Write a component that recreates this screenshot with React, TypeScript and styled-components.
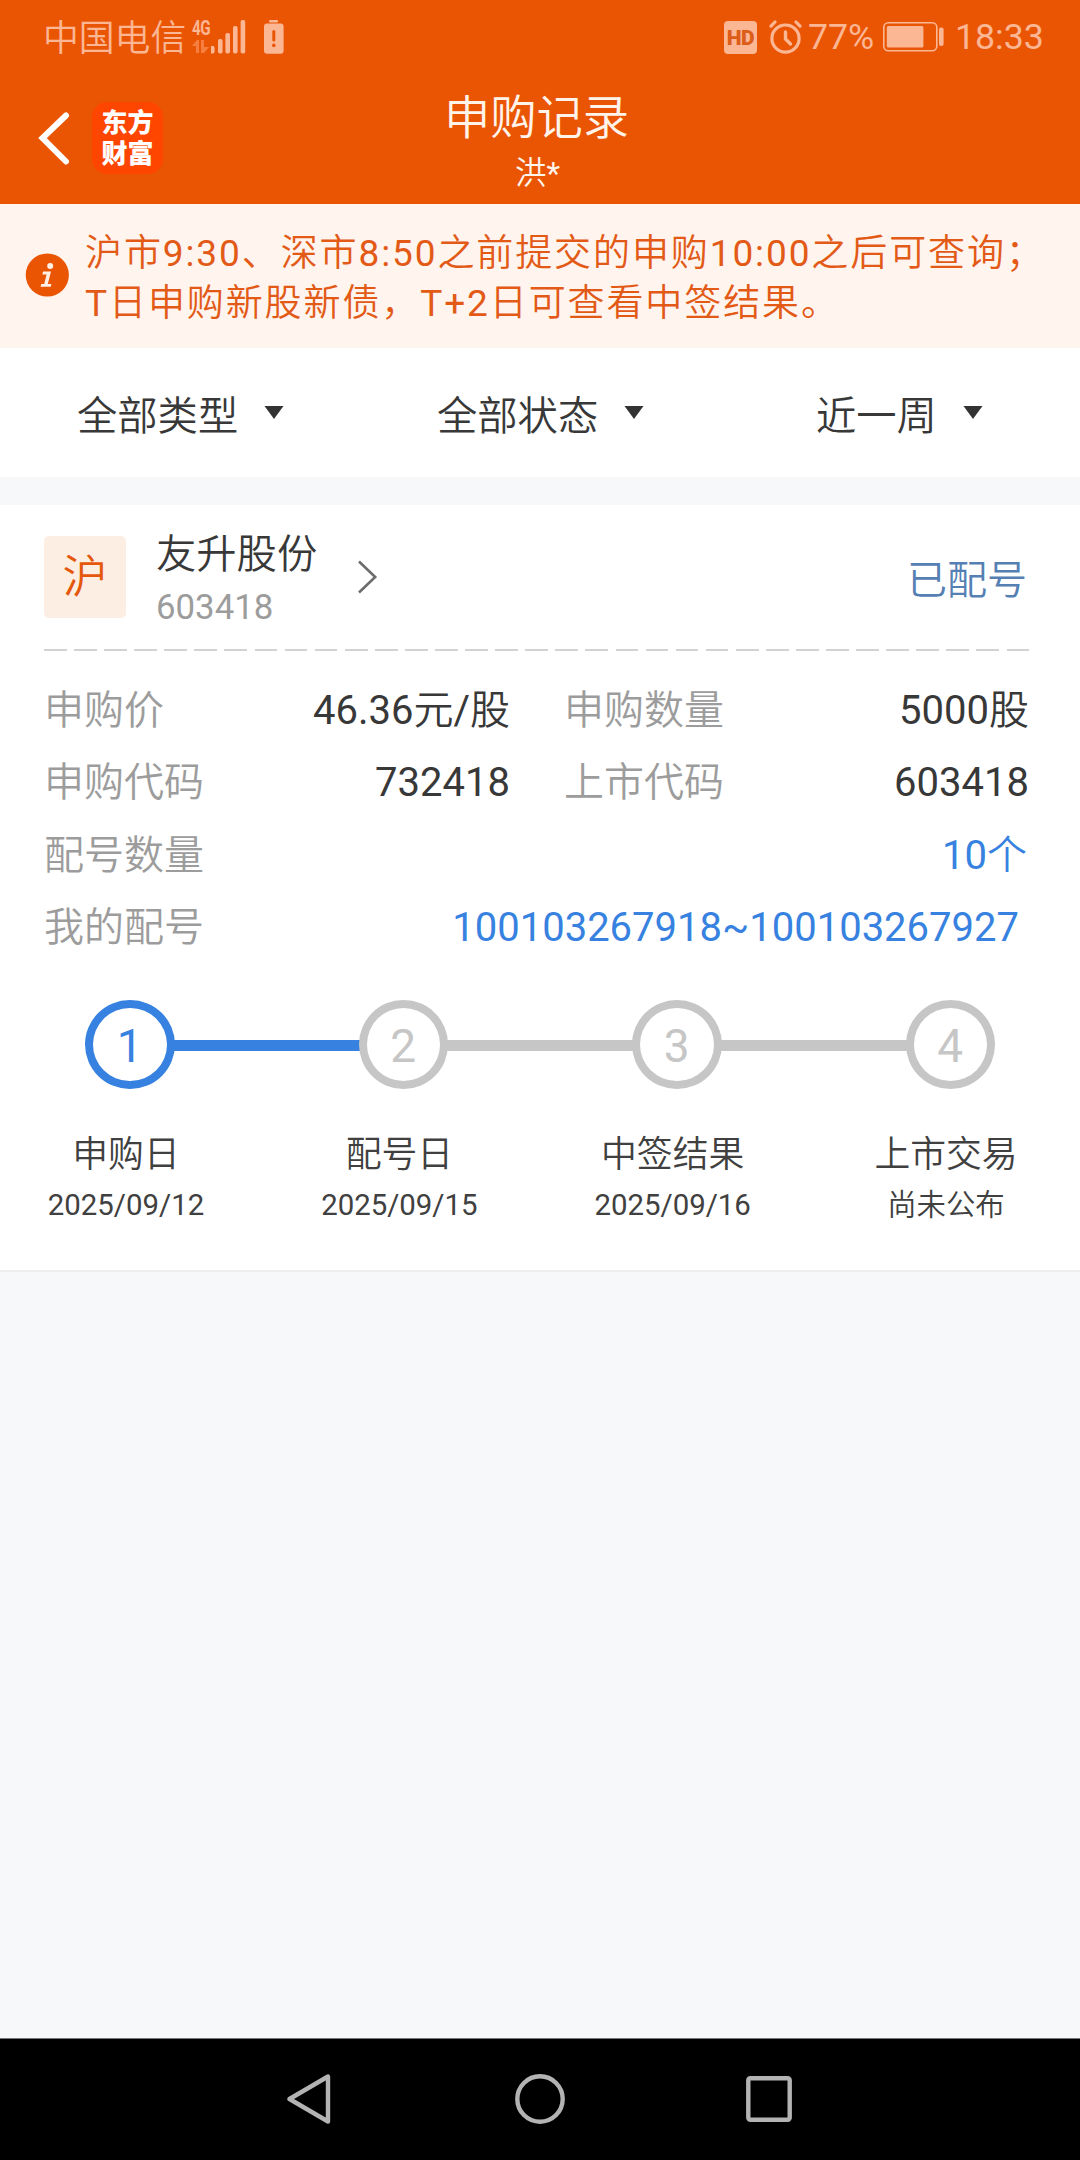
import React from 'react';
import styled, { createGlobalStyle } from 'styled-components';

const ORANGE = '#ea5504';
const PEACH = '#fbb694';
const BLUE = '#3782e0';
const GREY = '#c6c6c6';
const PAGE = '#f6f8fa';

const GlobalStyle = createGlobalStyle`
  * { box-sizing: border-box; }
  body {
    margin: 0;
    background: ${PAGE};
    font-family: Roboto, 'Noto Sans CJK SC DemiLight', 'Noto Sans CJK SC Light', 'Noto Sans CJK SC', sans-serif;
  }
  svg { display: block; flex: none; }
`;

const Screen = styled.div`
  display: flex;
  flex-direction: column;
  width: 1080px;
  height: 2160px;
  overflow: hidden;
  white-space: nowrap;
  background: ${PAGE};
`;

const StatusBar = styled.div`
  display: flex;
  justify-content: space-between;
  height: 74px;
  padding: 0 37px 0 43px;
  background: ${ORANGE};
  color: ${PEACH};
`;

const StatusGroup = styled.div`
  display: flex;
  align-items: center;
  height: 74px;
`;

const StatusText = styled.span<{ $w: number }>`
  width: ${(p) => p.$w}px;
  font-size: 35.7px;
  line-height: 74px;
`;

const Carrier = styled.span`
  width: 145px;
  padding-top: 3px;
  font-size: 35.8px;
  line-height: 72px;
`;

const Network = styled.div`
  display: flex;
  flex-direction: column;
  width: 19px;
  margin: 0 0 1px 4px;
`;

const NetworkText = styled.span`
  height: 20px;
  font-size: 20px;
  font-weight: 700;
  line-height: 16px;
  letter-spacing: -0.5px;
  transform: scaleX(0.76);
  transform-origin: left;
`;

const HdBadge = styled.span`
  width: 33px;
  height: 33px;
  margin-right: 12px;
  border-radius: 4px;
  background: ${PEACH};
  color: #dc5c18;
  font-size: 21px;
  font-weight: 900;
  line-height: 34px;
  text-align: center;
  letter-spacing: -0.5px;
`;

const Header = styled.header`
  display: grid;
  grid-template-columns: 240px 1fr 240px;
  height: 130px;
  background: ${ORANGE};
  color: #fff3ea;
`;

const HeaderLeft = styled.div`
  display: flex;
  align-items: center;
  gap: 22px;
  height: 128px;
  padding-left: 38px;
`;

const Logo = styled.div`
  display: flex;
  flex-direction: column;
  align-items: center;
  width: 71px;
  height: 72px;
  padding-top: 6px;
  border-radius: 15px;
  background: #ff4600;
  color: #fff;
  font-family: Roboto, 'Noto Sans CJK SC', sans-serif;
  font-size: 26px;
  font-weight: 900;
  line-height: 31px;
`;

const HeaderTitle = styled.div`
  display: flex;
  flex-direction: column;
  align-items: center;
`;

const Title = styled.h1`
  margin: 14px 0 0 -7px;
  font-size: 46.3px;
  font-weight: 400;
  line-height: 60px;
`;

const Account = styled.span`
  margin-left: -5px;
  font-size: 31.5px;
  line-height: 52px;
`;

const Notice = styled.div`
  display: flex;
  align-items: center;
  gap: 15px;
  height: 144px;
  padding: 0 0 2px 25px;
  background: #fff4ee;
  color: #e25a16;
`;

const NoticeText = styled.p`
  margin: 8px 0 0;
  font-size: 37px;
  line-height: 49.6px;
  letter-spacing: 1.9px;
`;

const Filters = styled.div`
  display: flex;
  height: 129px;
  padding-left: 77px;
  background: #fff;
  color: #383838;
`;

const Filter = styled.div<{ $w: number }>`
  display: flex;
  align-items: center;
  gap: 26px;
  width: ${(p) => p.$w}px;
  height: 129px;
  font-size: 40.3px;
`;

const Card = styled.section`
  display: flex;
  flex-direction: column;
  height: 767px;
  margin-top: 28px;
  border-bottom: 2px solid #eceeef;
  background: #fff;
`;

const StockHead = styled.div`
  display: flex;
  align-items: center;
  height: 144px;
  padding: 0 53px 0 44px;
`;

const Market = styled.div`
  width: 82px;
  height: 82px;
  margin-right: 30px;
  border-radius: 5px;
  background: #fdeee4;
  color: #e5580c;
  font-size: 45px;
  line-height: 84px;
  text-align: center;
`;

const StockNames = styled.div`
  display: flex;
  flex-direction: column;
  width: 201px;
  padding-top: 8px;
`;

const StockName = styled.span`
  color: #383838;
  font-size: 40.3px;
  line-height: 52px;
`;

const StockCode = styled.span`
  color: #9c9c9c;
  font-size: 34.8px;
  line-height: 52px;
`;

const State = styled.span`
  margin: 8px 0 0 auto;
  color: #5580b4;
  font-size: 40px;
  line-height: 54px;
`;

const Divider = styled.div`
  height: 2px;
  margin: 0 51px 0 44px;
  background: repeating-linear-gradient(90deg, #d2d2d2 0 22.7px, transparent 22.7px 30.08px);
`;

const Details = styled.div`
  display: grid;
  grid-template-columns: 466px 465px;
  column-gap: 54px;
  grid-auto-rows: 72.4px;
  padding: 23px 0 0 44px;
`;

const Detail = styled.div<{ $wide?: boolean; $blue?: boolean; $inset?: number }>`
  grid-column: ${(p) => (p.$wide ? '1 / -1' : 'auto')};
  display: flex;
  justify-content: space-between;
  padding-right: ${(p) => p.$inset || 0}px;
  color: ${(p) => (p.$blue ? BLUE : '#383838')};
  font-size: 40px;
  line-height: 73px;
`;

const Label = styled.span`
  color: #9c9c9c;
`;

const Track = styled.div`
  display: flex;
  align-items: center;
  height: 89px;
  margin-top: 36px;
  padding: 0 85px;
`;

const Dot = styled.div<{ $on?: boolean }>`
  width: 89.5px;
  height: 89px;
  border: 8.6px solid ${(p) => (p.$on ? BLUE : GREY)};
  border-radius: 50%;
  color: ${(p) => (p.$on ? BLUE : GREY)};
  font-size: 46px;
  line-height: 76px;
  text-align: center;
`;

const Bar = styled.div<{ $on?: boolean }>`
  flex: 1;
  height: 11px;
  margin: 2px -2px 0;
  background: ${(p) => (p.$on ? BLUE : GREY)};
`;

const StepLabels = styled.div`
  display: flex;
  justify-content: space-between;
  margin-top: 39px;
  padding: 0 44px 0 36px;
  color: #404040;
`;

const StepLabel = styled.div`
  display: flex;
  flex-direction: column;
  align-items: center;
  width: 180px;
`;

const StepName = styled.span`
  font-size: 35.8px;
  line-height: 54px;
`;

const StepDate = styled.span`
  font-size: 29.4px;
  line-height: 47px;
`;

const NavBar = styled.nav`
  display: flex;
  justify-content: space-between;
  align-items: center;
  height: 122px;
  margin-top: auto;
  padding: 0 288px 1px 287px;
  border-top: 1px solid #777;
  background: #000;
`;

const signalBars = [
  [210, 45],
  [218, 38],
  [225.4, 32],
  [233, 25],
  [240.6, 19],
];

const steps = [
  { name: '申购日', date: '2025/09/12' },
  { name: '配号日', date: '2025/09/15' },
  { name: '中签结果', date: '2025/09/16' },
  { name: '上市交易', date: '尚未公布' },
];

const filters = [
  { name: '全部类型', width: 360 },
  { name: '全部状态', width: 379 },
  { name: '近一周', width: 200 },
];

const Arrow = () => (
  <svg width="20" height="13" viewBox="0 0 20 13">
    <path d="M0.5 0H19.5L10 13Z" fill="#333" />
  </svg>
);

export default function App() {
  return (
    <Screen>
      <GlobalStyle />
      <StatusBar>
        <StatusGroup>
          <Carrier>中国电信</Carrier>
          <Network>
            <NetworkText>4G</NetworkText>
            <svg width="17" height="13" viewBox="0 0 17 13" fill="#f67f40">
              <path d="M0 6L5 0H7V13H4V6ZM9 0H12V7H17L12 13H9Z" />
            </svg>
          </Network>
          <svg width="36" height="34" viewBox="211 19 36 34" fill={PEACH}>
            {signalBars.map(([x, y]) => (
              <rect key={x} x={x} y={y} width="4.6" height={52.5 - y} rx="1.8" />
            ))}
          </svg>
          <svg width="20" height="34" viewBox="0 0 20 34" style={{ marginLeft: 17 }}>
            <rect x="5" y="0" width="9" height="2.4" rx="1" fill={PEACH} />
            <rect x="0" y="3.4" width="19.6" height="30.4" rx="3" fill={PEACH} />
            <path d="M9.8 11.5V20" stroke={ORANGE} strokeWidth="3" strokeLinecap="round" />
            <circle cx="9.8" cy="25.4" r="1.8" fill={ORANGE} />
          </svg>
        </StatusGroup>
        <StatusGroup>
          <HdBadge>HD</HdBadge>
          <svg width="34" height="34" viewBox="0 0 34 34" fill="none" stroke={PEACH} strokeLinecap="round" style={{ marginRight: 5 }}>
            <circle cx="16.5" cy="18.6" r="13.6" strokeWidth="3.2" />
            <path d="M16.5 12V19L21.5 24" strokeWidth="3.4" strokeLinejoin="round" />
            <path d="M2 6.2L6 2M31 6.2L27 2" strokeWidth="3.2" />
          </svg>
          <StatusText $w={75}>77%</StatusText>
          <svg width="62" height="30" viewBox="0 0 62 30" style={{ marginRight: 10 }}>
            <rect x="0.8" y="0.8" width="53" height="28" rx="4.5" fill="none" stroke={PEACH} strokeWidth="1.6" />
            <rect x="3.8" y="4" width="36.6" height="21.4" rx="1.5" fill={PEACH} />
            <rect x="56" y="5.4" width="4.6" height="18.6" rx="2" fill={PEACH} />
          </svg>
          <StatusText $w={88}>18:33</StatusText>
        </StatusGroup>
      </StatusBar>

      <Header>
        <HeaderLeft>
          <svg width="32" height="54" viewBox="0 0 32 54" fill="none" stroke="#fff" strokeWidth="6" strokeLinecap="round">
            <path d="M28 4.5L4.5 27L28 50.5" />
          </svg>
          <Logo>
            <span>东方</span>
            <span>财富</span>
          </Logo>
        </HeaderLeft>
        <HeaderTitle>
          <Title>申购记录</Title>
          <Account>洪*</Account>
        </HeaderTitle>
      </Header>

      <Notice>
        <svg width="45" height="44" viewBox="0 0 45 44">
          <circle cx="22.3" cy="22" r="21.6" fill={ORANGE} />
          <g fill="#fff0e6">
            <circle cx="25.2" cy="13" r="3" />
            <path d="M18 18.6H26L22.8 31H26.4L25.8 33.8H15.6L16.2 31H19.2L21.6 21.4H17.4Z" />
          </g>
        </svg>
        <NoticeText>
          沪市9:30、深市8:50之前提交的申购10:00之后可查询；
          <br />
          T日申购新股新债，T+2日可查看中签结果。
        </NoticeText>
      </Notice>

      <Filters>
        {filters.map((f) => (
          <Filter key={f.name} $w={f.width}>
            {f.name}
            <Arrow />
          </Filter>
        ))}
      </Filters>

      <Card>
        <StockHead>
          <Market>沪</Market>
          <StockNames>
            <StockName>友升股份</StockName>
            <StockCode>603418</StockCode>
          </StockNames>
          <svg width="22" height="34" viewBox="0 0 22 34" fill="none" stroke="#6c6c6c" strokeWidth="2.6">
            <path d="M2 1.5L18.2 17L2 32.5" />
          </svg>
          <State>已配号</State>
        </StockHead>
        <Divider />
        <Details>
          <Detail>
            <Label>申购价</Label>
            <span>46.36元/股</span>
          </Detail>
          <Detail>
            <Label>申购数量</Label>
            <span>5000股</span>
          </Detail>
          <Detail>
            <Label>申购代码</Label>
            <span>732418</span>
          </Detail>
          <Detail>
            <Label>上市代码</Label>
            <span>603418</span>
          </Detail>
          <Detail $wide $blue $inset={2}>
            <Label>配号数量</Label>
            <span>10个</span>
          </Detail>
          <Detail $wide $blue $inset={10}>
            <Label>我的配号</Label>
            <span>100103267918~100103267927</span>
          </Detail>
        </Details>
        <Track>
          {steps.map((s, i) => (
            <React.Fragment key={s.name}>
              {i > 0 && <Bar $on={i === 1} />}
              <Dot $on={i === 0}>{i + 1}</Dot>
            </React.Fragment>
          ))}
        </Track>
        <StepLabels>
          {steps.map((s) => (
            <StepLabel key={s.name}>
              <StepName>{s.name}</StepName>
              <StepDate>{s.date}</StepDate>
            </StepLabel>
          ))}
        </StepLabels>
      </Card>

      <NavBar>
        <svg width="46" height="52" viewBox="0 0 46 52" fill="none" stroke="#b3b3b3" strokeWidth="4.4" strokeLinejoin="round">
          <path d="M2.5 26L41 3.5V48.5Z" />
        </svg>
        <svg width="50" height="50" viewBox="0 0 50 50" fill="none" stroke="#b3b3b3" strokeWidth="4.4">
          <circle cx="25" cy="25" r="22.7" />
        </svg>
        <svg width="46" height="46" viewBox="0 0 46 46" fill="none" stroke="#b3b3b3" strokeWidth="4.4">
          <rect x="2.3" y="2.3" width="41.4" height="41.4" rx="2" />
        </svg>
      </NavBar>
    </Screen>
  );
}
